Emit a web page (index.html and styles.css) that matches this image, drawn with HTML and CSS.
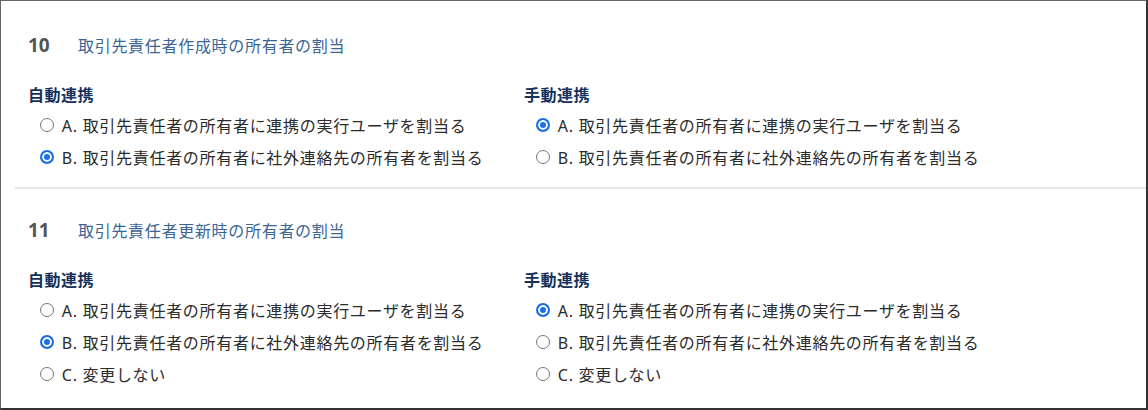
FILE: index.html
```html
<!DOCTYPE html>
<html lang="ja">
<head>
    <meta charset="UTF-8">
    <title>所有者の割当</title>
    <link rel="stylesheet" href="styles.css">
</head>
<body>

    <div class="panel">
        <!-- 10: 作成時 -->
        <section class="setting">
            <div class="setting-title">
                <span class="setting-no">10</span>
                <span class="setting-name">取引先責任者作成時の所有者の割当</span>
            </div>
            <div class="columns">
                <div class="column">
                    <h4>自動連携</h4>
                    <label class="option"><input type="radio" name="s10-auto"> A. 取引先責任者の所有者に連携の実行ユーザを割当る</label>
                    <label class="option"><input type="radio" name="s10-auto" checked> B. 取引先責任者の所有者に社外連絡先の所有者を割当る</label>
                </div>
                <div class="column">
                    <h4>手動連携</h4>
                    <label class="option"><input type="radio" name="s10-manual" checked> A. 取引先責任者の所有者に連携の実行ユーザを割当る</label>
                    <label class="option"><input type="radio" name="s10-manual"> B. 取引先責任者の所有者に社外連絡先の所有者を割当る</label>
                </div>
            </div>
        </section>

        <!-- 11: 更新時 -->
        <section class="setting">
            <div class="setting-title">
                <span class="setting-no">11</span>
                <span class="setting-name">取引先責任者更新時の所有者の割当</span>
            </div>
            <div class="columns">
                <div class="column">
                    <h4>自動連携</h4>
                    <label class="option"><input type="radio" name="s11-auto"> A. 取引先責任者の所有者に連携の実行ユーザを割当る</label>
                    <label class="option"><input type="radio" name="s11-auto" checked> B. 取引先責任者の所有者に社外連絡先の所有者を割当る</label>
                    <label class="option"><input type="radio" name="s11-auto"> C. 変更しない</label>
                </div>
                <div class="column">
                    <h4>手動連携</h4>
                    <label class="option"><input type="radio" name="s11-manual" checked> A. 取引先責任者の所有者に連携の実行ユーザを割当る</label>
                    <label class="option"><input type="radio" name="s11-manual"> B. 取引先責任者の所有者に社外連絡先の所有者を割当る</label>
                    <label class="option"><input type="radio" name="s11-manual"> C. 変更しない</label>
                </div>
            </div>
        </section>
    </div>

</body>
</html>
```

FILE: styles.css
```css
/* Basic Reset */
* {
    margin: 0;
    padding: 0;
    box-sizing: border-box;
}

body {
    font-family: 'Noto Sans', 'Noto Sans CJK JP', sans-serif;
    color: #222;
    background: #fff;
    font-size: 16px;
}

/* Outer frame */
.panel {
    width: 1148px;
    height: 410px;
    border-top: 1px solid #666;
    border-left: 1px solid #666;
    border-right: 2px solid #333;
    border-bottom: 2px solid #333;
    padding-left: 14px;
}

/* Each numbered setting */
.setting {
    padding: 33px 0 14px 13px;
}

.setting + .setting {
    border-top: 2px solid #e6e6e6;
    padding-top: 30px;
}

.setting-title {
    display: flex;
    align-items: center;
    height: 22px;
}

.setting-no {
    width: 50px;
    font-family: 'Open Sans', sans-serif;
    font-weight: 700;
    font-size: 19px;
    color: #555;
}

.setting-name {
    font-family: 'Noto Sans CJK JP', sans-serif;
    font-size: 16px;
    letter-spacing: 0.7px;
    color: #3a6594;
}

/* Two columns: auto / manual */
.columns {
    display: grid;
    grid-template-columns: 496px 1fr;
    margin-top: 27px;
}

.column h4 {
    font-family: 'Noto Sans CJK JP', sans-serif;
    font-size: 16px;
    letter-spacing: 0.5px;
    font-weight: 700;
    color: #16325c;
    line-height: 22px;
    margin-bottom: 4px;
}

.option {
    display: flex;
    align-items: center;
    height: 32px;
    padding-left: 12px;
    font-family: 'Noto Sans', 'Noto Sans CJK JP', sans-serif;
    font-size: 16px;
    letter-spacing: 0.7px;
    color: #2b2b2b;
    white-space: pre;
}

/* Radio drawn by hand so the ring matches */
.option input {
    appearance: none;
    flex: none;
    width: 14px;
    height: 14px;
    margin-right: 3px;
    border: 1px solid #777;
    border-radius: 50%;
    background: #fff;
}

.option input:checked {
    border: 2px solid #1a6fe3;
    background: #1a6fe3;
    box-shadow: inset 0 0 0 2px #fff;
}
```
